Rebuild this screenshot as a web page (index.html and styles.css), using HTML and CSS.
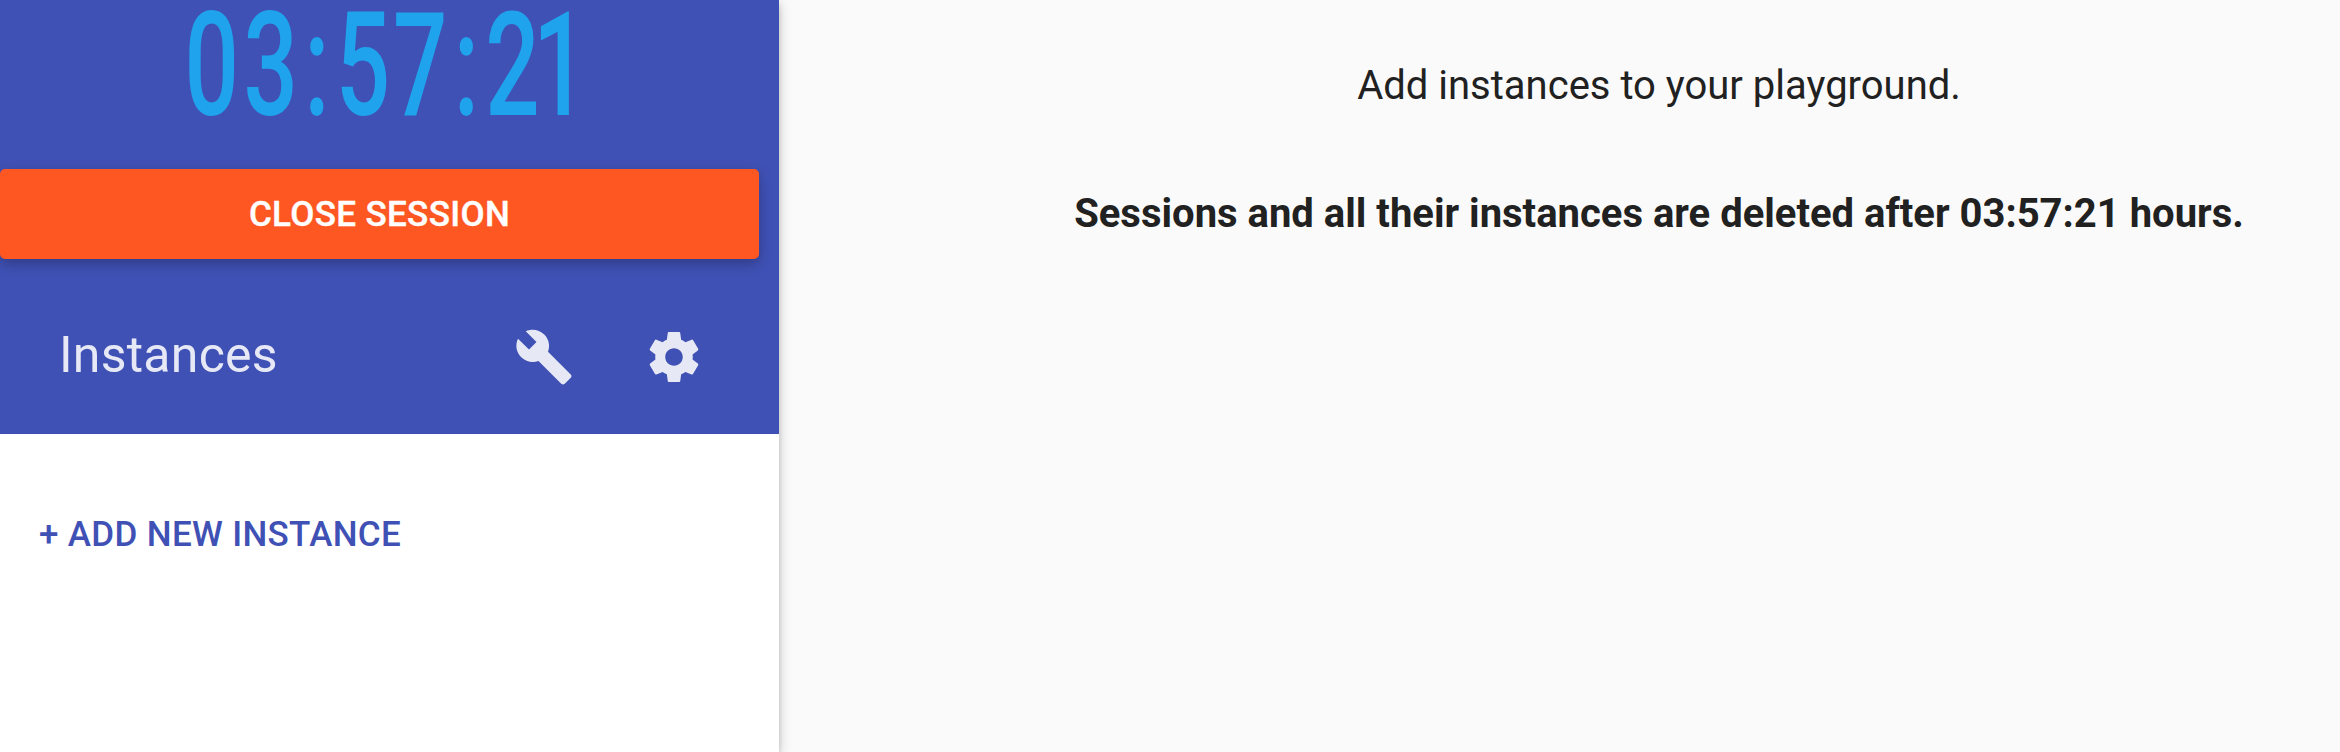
FILE: index.html
```html
<!DOCTYPE html>
<html lang="en">
<head>
<meta charset="utf-8">
<title>Playground</title>
<link rel="stylesheet" href="styles.css">
</head>
<body>
<div class="app">
  <aside class="sidebar">
    <header class="sidebar-header">
      <div class="clock"><span class="clock-text"><span class="wide">0</span>3<span class="colon">:</span>57<span class="colon">:</span><span class="tight">2</span>1</span></div>
      <button class="close-button">CLOSE SESSION</button>
      <div class="toolbar">
        <h1 class="toolbar-title">Instances</h1>
        <svg class="icon" viewBox="0 0 24 24"><path d="M22.7 19l-9.1-9.1c.9-2.3.4-5-1.5-6.9-2-2-5-2.4-7.4-1.3L9 6 6 9 1.6 4.7C.4 7.1.9 10.1 2.9 12.1c1.9 1.9 4.6 2.4 6.9 1.5l9.1 9.1c.4.4 1 .4 1.4 0l2.3-2.3c.5-.4.5-1.1.1-1.4z"/></svg>
        <svg class="icon" viewBox="0 0 24 24"><path d="M19.43 12.98c.04-.32.07-.64.07-.98s-.03-.66-.07-.98l2.11-1.65c.19-.15.24-.42.12-.64l-2-3.46c-.12-.22-.39-.3-.61-.22l-2.49 1c-.52-.4-1.08-.73-1.69-.98l-.38-2.65C14.46 2.18 14.25 2 14 2h-4c-.25 0-.46.18-.49.42l-.38 2.65c-.61.25-1.17.59-1.69.98l-2.49-1c-.23-.09-.49 0-.61.22l-2 3.46c-.13.22-.07.49.12.64l2.11 1.65c-.04.32-.07.65-.07.98s.03.66.07.98l-2.11 1.65c-.19.15-.24.42-.12.64l2 3.46c.12.22.39.3.61.22l2.49-1c.52.4 1.08.73 1.69.98l.38 2.65c.03.24.24.42.49.42h4c.25 0 .46-.18.49-.42l.38-2.65c.61-.25 1.17-.59 1.69-.98l2.49 1c.23.09.49 0 .61-.22l2-3.46c.12-.22.07-.49-.12-.64l-2.11-1.65zM12 15.5c-1.93 0-3.5-1.57-3.5-3.5s1.57-3.5 3.5-3.5 3.5 1.57 3.5 3.5-1.57 3.5-3.5 3.5z"/></svg>
      </div>
    </header>
    <button class="add-button">+ ADD NEW INSTANCE</button>
  </aside>
  <main class="content">
    <p class="hint">Add instances to your playground.</p>
    <p class="notice">Sessions and all their instances are deleted after 03:57:21 hours.</p>
  </main>
</div>
</body>
</html>
```
FILE: styles.css
```css
* { box-sizing: border-box; }
body {
  margin: 0;
  background: #fafafa;
  color: #212121;
  font-family: Roboto, sans-serif;
  overflow: hidden;
}
.app { display: flex; height: 752px; }
.sidebar {
  flex: none;
  width: 779px;
  background: #fff;
  box-shadow: 0 2.5px 12.5px rgba(0, 0, 0, .2), 0 5px 5px rgba(0, 0, 0, .14), 0 7.5px 2.5px -5px rgba(0, 0, 0, .12);
}
.sidebar-header { height: 434px; background: #3f51b5; }
.clock {
  display: flex;
  justify-content: center;
  width: 759px;
  height: 169px;
  padding-left: 16px;
  color: #1fa3ec;
  font-size: 145px;
  font-weight: 500;
  line-height: 130px;
}
.clock-text {
  transform: scaleX(.66);
  letter-spacing: 4.5px;
  white-space: nowrap;
}
.wide { letter-spacing: 7px; }
.colon { padding: 0 5px; }
.tight { letter-spacing: -10px; }
button {
  display: block;
  border: 0;
  font: 500 35px/90px Roboto, sans-serif;
}
.close-button {
  width: 759px;
  height: 90px;
  padding: 1px 0 0;
  border-radius: 5px;
  background: #ff5722;
  color: #fff;
  letter-spacing: .35px;
  -webkit-text-stroke: .4px #fff;
  box-shadow: 0 5px 12.5px rgba(0, 0, 0, .26);
}
.toolbar {
  display: flex;
  align-items: center;
  gap: 70px;
  height: 160px;
  margin-top: 18px;
  padding: 0 75px 0 59px;
  color: rgba(255, 255, 255, .87);
}
.toolbar-title {
  flex: 1;
  margin: 0;
  padding-bottom: 4px;
  font-size: 50px;
  font-weight: 400;
  line-height: 60px;
  letter-spacing: .25px;
}
.icon { flex: none; width: 60px; height: 60px; fill: rgba(255, 255, 255, .87); }
.add-button {
  margin: 56px 0 0 15px;
  padding: 0 24px;
  background: transparent;
  color: #3f51b5;
  letter-spacing: .33px;
}
.content {
  flex: 1;
  padding: 61px 0 0 199px;
  text-align: center;
  font-size: 40px;
  line-height: 50px;
}
.hint, .notice { margin: 0; white-space: nowrap; }
.notice { margin-top: 78px; font-weight: 700; }
```
